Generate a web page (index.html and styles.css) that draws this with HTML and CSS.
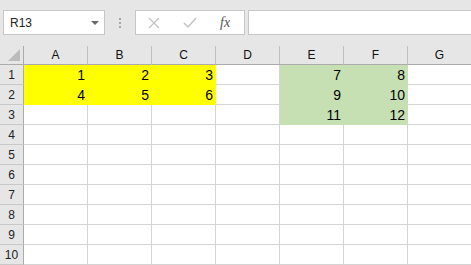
FILE: index.html
```html
<!DOCTYPE html>
<html lang="en">
<head>
    <meta charset="UTF-8">
    <title>Sheet1</title>
    <link rel="stylesheet" href="styles.css">
</head>
<body>
    <div class="toolbar">
        <div class="name-box">
            <span>R13</span>
            <span class="caret"></span>
        </div>
        <div class="grip"><i></i><i></i><i></i></div>
        <div class="fx-box">
            <svg class="icon" width="12" height="12" viewBox="0 0 12 12">
                <path d="M1 1 L11 11 M11 1 L1 11" stroke="#c3c3c3" stroke-width="1.3" fill="none"/>
            </svg>
            <svg class="icon" width="14" height="12" viewBox="0 0 14 12">
                <path d="M1 6 L5 10 L13 1" stroke="#c3c3c3" stroke-width="1.5" fill="none"/>
            </svg>
            <span class="fx">fx</span>
        </div>
        <div class="formula"></div>
    </div>

    <div class="sheet">
        <div class="corner"><span class="tri"></span></div>
        <div class="col-head">A</div>
        <div class="col-head">B</div>
        <div class="col-head">C</div>
        <div class="col-head">D</div>
        <div class="col-head">E</div>
        <div class="col-head">F</div>
        <div class="col-head">G</div>

        <div class="row-head">1</div>
        <div class="cell yellow">1</div><div class="cell yellow">2</div><div class="cell yellow">3</div>
        <div class="cell"></div>
        <div class="cell green">7</div><div class="cell green">8</div>
        <div class="cell"></div>

        <div class="row-head">2</div>
        <div class="cell yellow">4</div><div class="cell yellow">5</div><div class="cell yellow">6</div>
        <div class="cell"></div>
        <div class="cell green">9</div><div class="cell green">10</div>
        <div class="cell"></div>

        <div class="row-head">3</div>
        <div class="cell"></div><div class="cell"></div><div class="cell"></div>
        <div class="cell"></div>
        <div class="cell green">11</div><div class="cell green">12</div>
        <div class="cell"></div>

        <div class="row-head">4</div>
        <div class="cell"></div><div class="cell"></div><div class="cell"></div><div class="cell"></div><div class="cell"></div><div class="cell"></div><div class="cell"></div>
        <div class="row-head">5</div>
        <div class="cell"></div><div class="cell"></div><div class="cell"></div><div class="cell"></div><div class="cell"></div><div class="cell"></div><div class="cell"></div>
        <div class="row-head">6</div>
        <div class="cell"></div><div class="cell"></div><div class="cell"></div><div class="cell"></div><div class="cell"></div><div class="cell"></div><div class="cell"></div>
        <div class="row-head">7</div>
        <div class="cell"></div><div class="cell"></div><div class="cell"></div><div class="cell"></div><div class="cell"></div><div class="cell"></div><div class="cell"></div>
        <div class="row-head">8</div>
        <div class="cell"></div><div class="cell"></div><div class="cell"></div><div class="cell"></div><div class="cell"></div><div class="cell"></div><div class="cell"></div>
        <div class="row-head">9</div>
        <div class="cell"></div><div class="cell"></div><div class="cell"></div><div class="cell"></div><div class="cell"></div><div class="cell"></div><div class="cell"></div>
        <div class="row-head">10</div>
        <div class="cell"></div><div class="cell"></div><div class="cell"></div><div class="cell"></div><div class="cell"></div><div class="cell"></div><div class="cell"></div>
    </div>
</body>
</html>
```

FILE: styles.css
```css
html, body {
    margin: 0;
    padding: 0;
    overflow: hidden;
}
body {
    background: #e6e6e6;
    font-family: "Liberation Sans", Arial, sans-serif;
    width: 471px;
    height: 265px;
}
.toolbar {
    display: flex;
    align-items: stretch;
    height: 25px;
    padding: 10px 0 11px 3px;
}
.name-box {
    box-sizing: border-box;
    width: 102px;
    background: #fff;
    border: 1px solid #c6c6c6;
    display: flex;
    align-items: center;
    justify-content: space-between;
    padding: 0 5px 0 6px;
    font-size: 12px;
    color: #222;
}
.caret {
    width: 0;
    height: 0;
    border-left: 4px solid transparent;
    border-right: 4px solid transparent;
    border-top: 4px solid #6a6a6a;
}
.grip {
    width: 30px;
    display: flex;
    flex-direction: column;
    align-items: center;
    justify-content: center;
    gap: 2px;
}
.grip i {
    display: block;
    width: 2px;
    height: 2px;
    background: #a8a8a8;
}
.fx-box {
    box-sizing: border-box;
    width: 110px;
    background: #fff;
    border: 1px solid #c6c6c6;
    display: flex;
    align-items: center;
    padding: 0 0 0 12px;
}
.fx-box .icon {
    margin-right: 23px;
}
.fx-box .icon + .icon {
    margin-right: 23px;
}
.fx {
    font-family: "Liberation Serif", serif;
    font-style: italic;
    font-size: 14px;
    color: #555;
}
.formula {
    flex: 1;
    margin-left: 3px;
    background: #fff;
    border: 1px solid #c6c6c6;
    border-right: none;
}
.sheet {
    display: grid;
    grid-template-columns: 24px repeat(7, 64px);
    grid-template-rows: 19px;
    grid-auto-rows: 20px;
}
.sheet > div {
    box-sizing: border-box;
}
.corner {
    background: #e6e6e6;
    border-right: 1px solid #ababab;
    border-bottom: 1px solid #ababab;
    position: relative;
}
.tri {
    position: absolute;
    right: 3px;
    bottom: 3px;
    width: 0;
    height: 0;
    border-left: 12px solid transparent;
    border-bottom: 12px solid #bcbcbc;
}
.col-head {
    background: #e6e6e6;
    border-right: 1px solid #c0c0c0;
    border-bottom: 1px solid #ababab;
    font-size: 12px;
    text-align: center;
    line-height: 18px;
    color: #111;
}
.row-head {
    background: #e6e6e6;
    border-right: 1px solid #ababab;
    border-bottom: 1px solid #c8c8c8;
    font-size: 12px;
    text-align: center;
    line-height: 20px;
    color: #222;
}
.cell {
    background: #fff;
    border-right: 1px solid #d4d4d4;
    border-bottom: 1px solid #d4d4d4;
    font-size: 14px;
    text-align: right;
    line-height: 20px;
    padding-right: 2px;
    color: #000;
}
.yellow {
    background: #ffff00;
    border-color: #ffff00;
}
.green {
    background: #c6e0b4;
    border-color: #c6e0b4;
}
```
